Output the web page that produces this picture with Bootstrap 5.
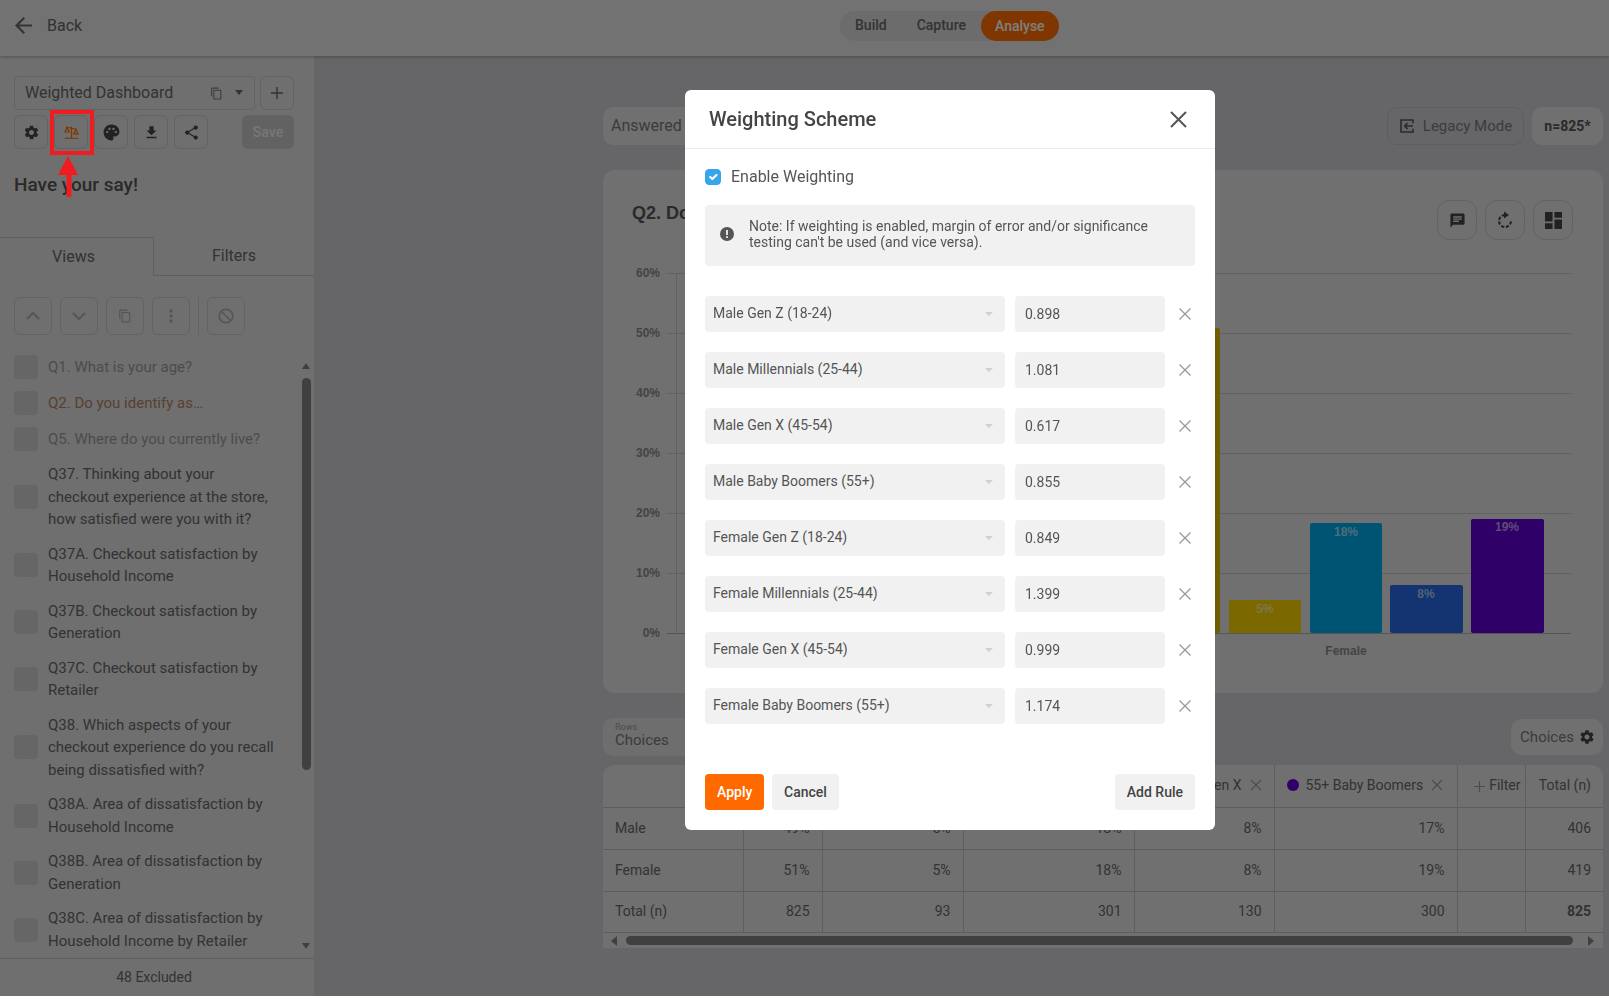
<!DOCTYPE html>
<html lang="en">
<head>
  <meta charset="UTF-8">
  <meta name="viewport" content="width=device-width, initial-scale=1">
  <title>Weighting Scheme</title>
  <link href="https://cdn.jsdelivr.net/npm/bootstrap@5.3.3/dist/css/bootstrap.min.css" rel="stylesheet">
  <style>
    body {
      font-family: Roboto, "Liberation Sans", sans-serif;
      background: #fff;
      color: #666;
      overflow: hidden;
    }
    .app-wrap { height: 996px; overflow: hidden; }
    .top-bar {
      height: 56px;
      padding: 0 15px 5px;
      background: #e5e5e5;
      box-shadow: 0 1px 3px rgba(0,0,0,.25);
      position: relative;
      z-index: 2;
    }
    .back-link { font-size: 16px; color: #666; gap: 15px; width: 825px; }
    .stage-pills { background: #d8d8d8; border-radius: 15px; height: 30px; font-size: 14px; font-weight: 500; color: #666; }
    .stage-pills span { padding: 0 15px; }
    .stage-pills .stage-on { background: #ff6d00; color: #fff; height: 30px; line-height: 30px; border-radius: 15px; padding: 0 14px; }
    .side-col { width: 314px; flex: none; background: #dedede; height: 940px; }
    .side-top { padding: 20px 20px 0 14px; }
    .dash-pick { width: 241px; height: 34px; border: 1px solid #c6c6c6; border-radius: 4px; font-size: 16px; padding: 0 10px; }
    .dash-copy { margin-right: 11px; }
    .tool-row { margin-top: 5px; gap: 6px; }
    .tool-btn { width: 34px; height: 34px; border: 1px solid #c6c6c6; border-radius: 6px; flex: none; color: #333; }
    .save-btn { width: 52px; height: 34px; margin-left: auto; background: #c4c4c4; border-radius: 6px; font-size: 14px; font-weight: 500; color: #f0f0f0; }
    .say-title { font-size: 19px; font-weight: 500; margin-top: 25px; height: 28px; line-height: 22px; color: #555; }
    .side-tabs { margin-top: 35px; height: 39px; font-size: 16px; }
    .side-tab-on { width: 154px; padding-right: 6px; border-top: 1px solid #bfbfbf; border-right: 1px solid #bfbfbf; }
    .side-tab-off { flex: 1; border-bottom: 1px solid #bfbfbf; }
    .list-tools { padding: 21px 0 0 14px; gap: 8px; height: 72px; }
    .list-tool { width: 38px; height: 38px; border: 1px solid #c6c6c6; border-radius: 6px; color: #aaa; flex: none; }
    .list-split { width: 1px; height: 38px; background: #c6c6c6; }
    .q-wrap { height: 610px; overflow: hidden; padding: 1px 0 0 14px; font-size: 15px; line-height: 22.5px; }
    .q-row { min-height: 36px; padding: 6px 40px 6px 0; gap: 10px; }
    .q-box { width: 24px; height: 24px; background: #cccccc; border-radius: 4px; flex: none; }
    .q-off { color: #999; }
    .q-cur { color: #b5805f; }
    .bar-thumb { position: absolute; left: 302px; top: 378px; width: 9px; height: 392px; background: #808080; border-radius: 5px; }
    .bar-up, .bar-down { position: absolute; left: 302px; width: 0; height: 0; border-left: 4.5px solid transparent; border-right: 4.5px solid transparent; }
    .bar-up { top: 363px; border-bottom: 6px solid #808080; }
    .bar-down { top: 943px; border-top: 6px solid #808080; }
    .side-foot { height: 38px; padding-right: 6px; border-top: 1px solid #c0c0c0; font-size: 14px; }
    .main-col { flex: 1; min-width: 0; background: #cdcdd1; padding: 51px 6px 0 289px; }
    .pill-box { width: 300px; height: 38px; background: #e0e0e0; border-radius: 10px; font-size: 16px; color: #777; }
    .legacy-btn { width: 137px; height: 38px; border: 1px solid #bdbdbd; border-radius: 10px; font-size: 15px; color: #777; gap: 8px; }
    .n-box { width: 71px; height: 38px; background: #e0e0e0; border-radius: 10px; font-size: 14px; font-weight: 700; color: #555; }
    .chart-panel { height: 523px; margin-top: 25px; background: #e1e1e1; border-radius: 12px; }
    .chart-head { height: 70px; padding: 30px 30px 0 29px; }
    .chart-title { width: 60px; height: 24px; overflow: hidden; white-space: nowrap; font-family: "Liberation Sans", sans-serif; font-size: 18px; font-weight: 700; color: #555; }
    .chart-btn { width: 40px; height: 40px; border: 1px solid #c4c4c4; border-radius: 12px; color: #444; }
    .chart-svg { display: block; }
    .chart-svg text { font-family: "Liberation Sans", sans-serif; font-size: 12px; font-weight: 700; }
    .rows-line { margin-top: 25px; height: 38px; }
    .rows-pill { width: 300px; height: 38px; background: #dcdcdc; border-radius: 10px; padding: 5px 12px; color: #777; line-height: 1; }
    .rows-cap { font-size: 9px; color: #999; }
    .rows-val { font-size: 15px; margin-top: 1px; }
    .choice-pill { width: 92px; height: 36px; background: #e0e0e0; border-radius: 10px; font-size: 15px; color: #777; gap: 6px; }
    .data-wrap { margin-top: 9px; height: 183px; background: #e1e1e1; border-radius: 12px 12px 0 0; overflow: hidden; }
    .data-grid { table-layout: fixed; width: 1000px; border-collapse: collapse; font-size: 14px; color: #666; margin: 0; }
    .data-grid th, .data-grid td { height: 42px; padding: 0 12px; border-bottom: 1px solid #bcbcbc; border-left: 1px solid #bcbcbc; background: transparent; color: #666; text-align: right; vertical-align: middle; font-weight: 400; white-space: nowrap; overflow: hidden; }
    .data-grid th:first-child, .data-grid td:first-child { border-left: 0; text-align: left; }
    .data-grid tr:last-child td { height: 41px; }
    .head-dot { display: inline-block; width: 12px; height: 12px; border-radius: 50%; background: #5c00d0; margin-right: 7px; vertical-align: -1px; }
    .head-x { margin-left: 8px; vertical-align: -1px; }
    .hscroll { height: 16px; padding: 3px 9px 0 8px; }
    .hs-thumb { flex: 1; height: 9px; background: #808080; border-radius: 5px; margin: 0 15px 0 9px; }
    .hs-left, .hs-right { width: 0; height: 0; border-top: 5px solid transparent; border-bottom: 5px solid transparent; }
    .hs-left { border-right: 6px solid #808080; }
    .hs-right { border-left: 6px solid #808080; }

    .modal-backdrop { height: 996px; }
    .weight-dialog { max-width: 530px; width: 530px; margin: 90px 0 0 685px; }
    .weight-panel { height: 740px; border: 0; border-radius: 6px; color: #555; }
    .weight-head { height: 59px; padding: 0 28px 0 24px; border-bottom: 1px solid #ececec; }
    .weight-title { font-size: 20px; font-weight: 500; color: #444; }
    .weight-body { padding: 20px 20px 0 20px; }
    .enable-line { height: 16px; gap: 10px; font-size: 16px; }
    .enable-line .form-check-input { width: 16px; height: 16px; margin: 0; background-color: #36a5ea; border-color: #36a5ea; }
    .note-box { height: 61px; margin-top: 20px; background: #f1f1f1; border-radius: 4px; padding: 0 30px 4px 15px; gap: 15px; font-size: 14px; line-height: 16px; }
    .rule-list { margin-top: 30px; gap: 20px; }
    .rule-line { height: 36px; gap: 10px; }
    .rule-pick { width: 300px; height: 36px; background: #f1f1f1; border-radius: 4px; padding: 0 12px 1px 8px; font-size: 14px; flex: none; }
    .rule-caret { width: 0; height: 0; border-left: 4px solid transparent; border-right: 4px solid transparent; border-top: 4px solid #d0d0d0; }
    .rule-num { width: 150px; height: 36px; flex: none; background: #f1f1f1; border: 0; border-radius: 4px; padding: 0 10px; font-size: 14px; color: #555; }
    .rule-x { margin-left: 4px; flex: none; }
    .act-line { margin-top: 50px; gap: 8px; }
    .act-btn { height: 36px; padding: 0 12px; border: 0; border-radius: 4px; background: #f1f1f1; font-size: 14px; font-weight: 500; color: #444; }
    .act-apply { width: 59px; background: #ff6a00; color: #fff; }
    .note-mark { position: absolute; left: 0; top: 0; z-index: 1060; pointer-events: none; }
  </style>
</head>
<body>

<div class="app-wrap position-relative">

  <!-- top bar -->
  <div class="top-bar d-flex align-items-center">
    <div class="back-link d-flex align-items-center">
      <svg width="17" height="17" viewBox="4 4 16 16" fill="#666"><path d="M20 11H7.83l5.59-5.59L12 4l-8 8 8 8 1.41-1.41L7.83 13H20v-2z"/></svg>
      <span>Back</span>
    </div>
    <div class="stage-pills d-flex align-items-center">
      <span>Build</span><span>Capture</span><span class="stage-on">Analyse</span>
    </div>
  </div>

  <div class="d-flex">
    <!-- left column -->
    <div class="side-col">
      <div class="side-top">
        <div class="d-flex">
          <div class="dash-pick d-flex align-items-center">
            <span class="flex-grow-1">Weighted Dashboard</span>
            <svg class="dash-copy" width="13" height="13" viewBox="0 0 24 24" fill="#777"><path d="M16 1H4c-1.1 0-2 .9-2 2v14h2V3h12V1zm3 4H8c-1.1 0-2 .9-2 2v14c0 1.1.9 2 2 2h11c1.1 0 2-.9 2-2V7c0-1.1-.9-2-2-2zm0 16H8V7h11v14z"/></svg>
            <svg width="10" height="6" viewBox="0 0 10 6" fill="#666"><path d="M1 0h8L5 5z"/></svg>
          </div>
          <div class="tool-btn d-flex align-items-center justify-content-center ms-auto">
            <svg width="14" height="14" viewBox="0 0 14 14" stroke="#666" stroke-width="1.4"><path d="M7 1v12M1 7h12"/></svg>
          </div>
        </div>
        <div class="tool-row d-flex">
          <div class="tool-btn d-flex align-items-center justify-content-center">
            <svg width="17" height="17" viewBox="0 0 24 24" fill="#444"><path d="M19.14 12.94c.04-.3.06-.61.06-.94 0-.32-.02-.64-.07-.94l2.03-1.58c.18-.14.23-.41.12-.61l-1.92-3.32c-.12-.22-.37-.29-.59-.22l-2.39.96c-.5-.38-1.03-.7-1.62-.94l-.36-2.54c-.04-.24-.24-.41-.48-.41h-3.84c-.24 0-.43.17-.47.41l-.36 2.54c-.59.24-1.13.57-1.62.94l-2.39-.96c-.22-.08-.47 0-.59.22L2.74 8.87c-.12.21-.08.47.12.61l2.03 1.58c-.05.3-.09.63-.09.94s.02.64.07.94l-2.03 1.58c-.18.14-.23.41-.12.61l1.92 3.32c.12.22.37.29.59.22l2.39-.96c.5.38 1.03.7 1.62.94l.36 2.54c.05.24.24.41.48.41h3.84c.24 0 .44-.17.47-.41l.36-2.54c.59-.24 1.13-.56 1.62-.94l2.39.96c.22.08.47 0 .59-.22l1.92-3.32c.12-.22.07-.47-.12-.61l-2.01-1.58zM12 15.6c-1.98 0-3.6-1.62-3.6-3.6s1.62-3.6 3.6-3.6 3.6 1.62 3.6 3.6-1.62 3.6-3.6 3.6z"/></svg>
          </div>
          <div class="tool-btn d-flex align-items-center justify-content-center">
            <svg width="15" height="14" viewBox="0 0 24 22" fill="none" stroke="#ff6d00" stroke-width="1.9"><path d="M1 21h22M12 2v19M3 3l18 4"/><path d="M5 4L1.500 11h7zM19 7l-3.500 7h7z"/></svg>
          </div>
          <div class="tool-btn d-flex align-items-center justify-content-center">
            <svg width="19" height="19" viewBox="0 0 24 24" fill="#444"><path d="M12 2C6.49 2 2 6.49 2 12s4.49 10 10 10c1.38 0 2.5-1.12 2.5-2.5 0-.61-.23-1.2-.64-1.67-.08-.1-.13-.21-.13-.33 0-.28.22-.5.5-.5H16c3.31 0 6-2.69 6-6 0-4.96-4.49-9-10-9zm5.5 11c-.83 0-1.5-.67-1.5-1.5s.67-1.5 1.5-1.5 1.5.67 1.5 1.5-.67 1.5-1.5 1.5zm-3-4c-.83 0-1.5-.67-1.5-1.5S13.67 6 14.5 6s1.5.67 1.5 1.5S15.33 9 14.5 9zM5 11.5C5 10.67 5.67 10 6.5 10S8 10.67 8 11.5 7.33 13 6.5 13 5 12.33 5 11.5zm6-4c0 .83-.67 1.5-1.5 1.5S8 8.33 8 7.5 8.67 6 9.5 6s1.5.67 1.5 1.5z"/></svg>
          </div>
          <div class="tool-btn d-flex align-items-center justify-content-center">
            <svg width="17" height="17" viewBox="0 0 24 24" fill="#444"><path d="M19 9h-4V3H9v6H5l7 7 7-7zM5 18v2h14v-2H5z"/></svg>
          </div>
          <div class="tool-btn d-flex align-items-center justify-content-center">
            <svg width="17" height="17" viewBox="0 0 24 24" fill="#444"><path d="M18 16.08c-.76 0-1.44.3-1.96.77L8.91 12.7c.05-.23.09-.46.09-.7s-.04-.47-.09-.7l7.05-4.11c.54.5 1.25.81 2.04.81 1.66 0 3-1.34 3-3s-1.34-3-3-3-3 1.34-3 3c0 .24.04.47.09.7L8.04 9.81C7.5 9.31 6.79 9 6 9c-1.66 0-3 1.34-3 3s1.34 3 3 3c.79 0 1.5-.31 2.04-.81l7.12 4.16c-.05.21-.08.43-.08.65 0 1.61 1.31 2.92 2.92 2.92s2.92-1.31 2.92-2.92-1.31-2.92-2.92-2.92z"/></svg>
          </div>
          <div class="save-btn d-flex align-items-center justify-content-center">Save</div>
        </div>
        <div class="say-title">Have your say!</div>
      </div>

      <div class="side-tabs d-flex">
        <div class="side-tab-on d-flex align-items-center justify-content-center">Views</div>
        <div class="side-tab-off d-flex align-items-center justify-content-center">Filters</div>
      </div>

      <div class="list-tools d-flex">
        <div class="list-tool d-flex align-items-center justify-content-center"><svg width="14" height="8" viewBox="0 0 14 8" fill="none" stroke="#aaa" stroke-width="2"><path d="M1 7l6-6 6 6"/></svg></div>
        <div class="list-tool d-flex align-items-center justify-content-center"><svg width="14" height="8" viewBox="0 0 14 8" fill="none" stroke="#aaa" stroke-width="2"><path d="M1 1l6 6 6-6"/></svg></div>
        <div class="list-tool d-flex align-items-center justify-content-center"><svg width="14" height="14" viewBox="0 0 24 24" fill="#aaa"><path d="M16 1H4c-1.1 0-2 .9-2 2v14h2V3h12V1zm3 4H8c-1.1 0-2 .9-2 2v14c0 1.1.9 2 2 2h11c1.1 0 2-.9 2-2V7c0-1.1-.9-2-2-2zm0 16H8V7h11v14z"/></svg></div>
        <div class="list-tool d-flex align-items-center justify-content-center"><svg width="4" height="14" viewBox="0 0 4 14" fill="#aaa"><circle cx="2" cy="2" r="1.7"/><circle cx="2" cy="7" r="1.7"/><circle cx="2" cy="12" r="1.7"/></svg></div>
        <div class="list-split"></div>
        <div class="list-tool d-flex align-items-center justify-content-center"><svg width="16" height="16" viewBox="0 0 16 16" fill="none" stroke="#aaa" stroke-width="1.6"><circle cx="8" cy="8" r="6.8"/><path d="M3.2 3.2l9.6 9.6"/></svg></div>
      </div>

      <div class="q-wrap">
        <div class="q-row d-flex align-items-center"><div class="q-box"></div><div class="q-off">Q1. What is your age?</div></div>
        <div class="q-row d-flex align-items-center"><div class="q-box"></div><div class="q-cur">Q2. Do you identify as…</div></div>
        <div class="q-row d-flex align-items-center"><div class="q-box"></div><div class="q-off">Q5. Where do you currently live?</div></div>
        <div class="q-row d-flex align-items-center"><div class="q-box"></div><div>Q37. Thinking about your checkout experience at the store, how satisfied were you with it?</div></div>
        <div class="q-row d-flex align-items-center"><div class="q-box"></div><div>Q37A. Checkout satisfaction by Household Income</div></div>
        <div class="q-row d-flex align-items-center"><div class="q-box"></div><div>Q37B. Checkout satisfaction by Generation</div></div>
        <div class="q-row d-flex align-items-center"><div class="q-box"></div><div>Q37C. Checkout satisfaction by Retailer</div></div>
        <div class="q-row d-flex align-items-center"><div class="q-box"></div><div>Q38. Which aspects of your checkout experience do you recall being dissatisfied with?</div></div>
        <div class="q-row d-flex align-items-center"><div class="q-box"></div><div>Q38A. Area of dissatisfaction by Household Income</div></div>
        <div class="q-row d-flex align-items-center"><div class="q-box"></div><div>Q38B. Area of dissatisfaction by Generation</div></div>
        <div class="q-row d-flex align-items-center"><div class="q-box"></div><div>Q38C. Area of dissatisfaction by Household Income by Retailer</div></div>
      </div>
      <div class="side-foot d-flex align-items-center justify-content-center">48 Excluded</div>
      <div class="bar-up"></div><div class="bar-thumb"></div><div class="bar-down"></div>
    </div>

    <!-- main column -->
    <div class="main-col">
      <div class="d-flex align-items-center">
        <div class="pill-box d-flex align-items-center px-2">Answered</div>
        <div class="legacy-btn d-flex align-items-center justify-content-center ms-auto">
          <svg width="16" height="16" viewBox="0 0 24 24" fill="none" stroke="#555" stroke-width="2.4"><path d="M21 8V3H3v18h18v-5"/><path d="M21 12H9M13 7.5L8.5 12l4.500 4.500"/></svg>
          <span>Legacy Mode</span>
        </div>
        <div class="n-box d-flex align-items-center justify-content-center ms-2">n=825*</div>
      </div>

      <div class="chart-panel">
        <div class="chart-head d-flex justify-content-between">
          <div class="chart-title">Q2. Do you identify as…</div>
          <div class="d-flex gap-2">
            <div class="chart-btn d-flex align-items-center justify-content-center"><svg width="17" height="17" viewBox="0 0 24 24" fill="#444"><path d="M20 2H4c-1.1 0-1.99.9-1.99 2L2 22l4-4h14c1.1 0 2-.9 2-2V4c0-1.1-.9-2-2-2zM6 9h12v2H6V9zm8 5H6v-2h8v2zm4-6H6V6h12v2z"/></svg></div>
            <div class="chart-btn d-flex align-items-center justify-content-center"><svg width="16" height="18" viewBox="0 0 16 18" fill="none" stroke="#444" stroke-width="2"><path d="M8 4a6 6 0 1 0 6 6" stroke-dasharray="3.2 1.6"/><path d="M7 .5l5 3.500-5 3.500z" fill="#444" stroke="none"/></svg></div>
            <div class="chart-btn d-flex align-items-center justify-content-center"><svg width="17" height="17" viewBox="3 3 18 18" fill="#444"><path d="M3 13h8V3H3v10zm0 8h8v-6H3v6zm10 0h8V11h-8v10zm0-18v6h8V3h-8z"/></svg></div>
          </div>
        </div>
        <svg class="chart-svg" width="1000" height="453" viewBox="0 0 1000 453">
          <g stroke="#c2c2c2" stroke-width="1">
            <path d="M64 33.5H968M64 93.5H968M64 153.5H968M64 213.5H968M64 273.5H968M64 333.5H968"/>
            <path d="M73.5 33V393" />
          </g>
          <path d="M64 393.5H968" stroke="#aaa"/>
          <g fill="#888" text-anchor="end">
            <text x="57" y="37">60%</text><text x="57" y="97">50%</text><text x="57" y="157">40%</text>
            <text x="57" y="217">30%</text><text x="57" y="277">20%</text><text x="57" y="337">10%</text><text x="57" y="397">0%</text>
          </g>
          <rect x="545" y="88" width="72" height="305" rx="2" fill="#e0ba00"/>
          <rect x="626" y="360" width="72" height="33" rx="2" fill="#f6d200"/>
          <rect x="707" y="283" width="72" height="110" rx="2" fill="#00a8e6"/>
          <rect x="787" y="345" width="73" height="48" rx="2" fill="#2768e2"/>
          <rect x="868" y="279" width="73" height="114" rx="2" fill="#5c00d0"/>
          <g fill="#fff" fill-opacity=".6" text-anchor="middle">
            <text x="662" y="373">5%</text><text x="743" y="296">18%</text><text x="823" y="358">8%</text><text x="904" y="291">19%</text>
          </g>
          <text x="743" y="415" text-anchor="middle" fill="#888">Female</text>
        </svg>
      </div>

      <div class="rows-line d-flex justify-content-between align-items-center">
        <div class="rows-pill"><div class="rows-cap">Rows</div><div class="rows-val">Choices</div></div>
        <div class="choice-pill d-flex align-items-center justify-content-center">
          <span>Choices</span>
          <svg width="14" height="14" viewBox="2 2 20 20" fill="#444"><path d="M19.14 12.94c.04-.3.06-.61.06-.94 0-.32-.02-.64-.07-.94l2.03-1.58c.18-.14.23-.41.12-.61l-1.92-3.32c-.12-.22-.37-.29-.59-.22l-2.39.96c-.5-.38-1.03-.7-1.62-.94l-.36-2.54c-.04-.24-.24-.41-.48-.41h-3.84c-.24 0-.43.17-.47.41l-.36 2.54c-.59.24-1.13.57-1.62.94l-2.39-.96c-.22-.08-.47 0-.59.22L2.74 8.87c-.12.21-.08.47.12.61l2.03 1.58c-.05.3-.09.63-.09.94s.02.64.07.94l-2.03 1.58c-.18.14-.23.41-.12.61l1.92 3.32c.12.22.37.29.59.22l2.39-.96c.5.38 1.03.7 1.62.94l.36 2.54c.05.24.24.41.48.41h3.84c.24 0 .44-.17.47-.41l.36-2.54c.59-.24 1.13-.56 1.62-.94l2.39.96c.22.08.47 0 .59-.22l1.92-3.32c.12-.22.07-.47-.12-.61l-2.01-1.58zM12 15.6c-1.98 0-3.6-1.62-3.6-3.6s1.62-3.6 3.6-3.6 3.6 1.62 3.6 3.6-1.62 3.6-3.6 3.6z"/></svg>
        </div>
      </div>

      <div class="data-wrap">
        <table class="table data-grid">
          <colgroup><col style="width:140px"><col style="width:79px"><col style="width:141px"><col style="width:171px"><col style="width:140px"><col style="width:183px"><col style="width:68px"><col style="width:78px"></colgroup>
          <thead>
            <tr>
              <th></th><th></th><th></th><th></th>
              <th>Gen X<svg class="head-x" width="12" height="12" viewBox="0 0 12 12" stroke="#999" stroke-width="1.2"><path d="M1 1l10 10M11 1L1 11"/></svg></th>
              <th class="text-start"><span class="head-dot"></span>55+ Baby Boomers<svg class="head-x" width="12" height="12" viewBox="0 0 12 12" stroke="#999" stroke-width="1.2"><path d="M1 1l10 10M11 1L1 11"/></svg></th>
              <th class="px-1"><svg width="11" height="11" viewBox="0 0 11 11" stroke="#999" stroke-width="1.2" class="me-1"><path d="M5.500 0v11M0 5.500h11"/></svg>Filter</th>
              <th>Total (n)</th>
            </tr>
          </thead>
          <tbody>
            <tr><td>Male</td><td>49%</td><td>5%</td><td>18%</td><td>8%</td><td>17%</td><td></td><td>406</td></tr>
            <tr><td>Female</td><td>51%</td><td>5%</td><td>18%</td><td>8%</td><td>19%</td><td></td><td>419</td></tr>
            <tr><td>Total (n)</td><td>825</td><td>93</td><td>301</td><td>130</td><td>300</td><td></td><td><b>825</b></td></tr>
          </tbody>
        </table>
        <div class="hscroll d-flex align-items-start">
          <div class="hs-left"></div><div class="hs-thumb"></div><div class="hs-right"></div>
        </div>
      </div>
    </div>
  </div>
</div>

<div class="modal-backdrop show"></div>

<div class="modal d-block" tabindex="-1">
  <div class="modal-dialog weight-dialog">
    <div class="modal-content weight-panel">
      <div class="weight-head d-flex align-items-center justify-content-between">
        <div class="weight-title">Weighting Scheme</div>
        <svg width="17" height="17" viewBox="0 0 17 17" stroke="#555" stroke-width="2"><path d="M1 1l15 15M16 1L1 16"/></svg>
      </div>
      <div class="weight-body">
        <div class="enable-line d-flex align-items-center">
          <input class="form-check-input" type="checkbox" checked>
          <span>Enable Weighting</span>
        </div>
        <div class="note-box d-flex align-items-center">
          <svg class="flex-shrink-0" width="14" height="14" viewBox="0 0 14 14"><circle cx="7" cy="7" r="7" fill="#555"/><rect x="6.1" y="3" width="1.8" height="5" fill="#f1f1f1"/><rect x="6.1" y="9.2" width="1.8" height="1.8" fill="#f1f1f1"/></svg>
          <div>Note: If weighting is enabled, margin of error and/or significance testing can't be used (and vice versa).</div>
        </div>
        <div class="rule-list d-flex flex-column">
          <div class="rule-line d-flex align-items-center"><div class="rule-pick d-flex align-items-center justify-content-between"><span>Male Gen Z (18-24)</span><span class="rule-caret"></span></div><input class="rule-num" value="0.898"><svg class="rule-x" width="12" height="12" viewBox="0 0 12 12" stroke="#999" stroke-width="1.3"><path d="M.5.5l11 11M11.500.5l-11 11"/></svg></div>
          <div class="rule-line d-flex align-items-center"><div class="rule-pick d-flex align-items-center justify-content-between"><span>Male Millennials (25-44)</span><span class="rule-caret"></span></div><input class="rule-num" value="1.081"><svg class="rule-x" width="12" height="12" viewBox="0 0 12 12" stroke="#999" stroke-width="1.3"><path d="M.5.5l11 11M11.500.5l-11 11"/></svg></div>
          <div class="rule-line d-flex align-items-center"><div class="rule-pick d-flex align-items-center justify-content-between"><span>Male Gen X (45-54)</span><span class="rule-caret"></span></div><input class="rule-num" value="0.617"><svg class="rule-x" width="12" height="12" viewBox="0 0 12 12" stroke="#999" stroke-width="1.3"><path d="M.5.5l11 11M11.500.5l-11 11"/></svg></div>
          <div class="rule-line d-flex align-items-center"><div class="rule-pick d-flex align-items-center justify-content-between"><span>Male Baby Boomers (55+)</span><span class="rule-caret"></span></div><input class="rule-num" value="0.855"><svg class="rule-x" width="12" height="12" viewBox="0 0 12 12" stroke="#999" stroke-width="1.3"><path d="M.5.5l11 11M11.500.5l-11 11"/></svg></div>
          <div class="rule-line d-flex align-items-center"><div class="rule-pick d-flex align-items-center justify-content-between"><span>Female Gen Z (18-24)</span><span class="rule-caret"></span></div><input class="rule-num" value="0.849"><svg class="rule-x" width="12" height="12" viewBox="0 0 12 12" stroke="#999" stroke-width="1.3"><path d="M.5.5l11 11M11.500.5l-11 11"/></svg></div>
          <div class="rule-line d-flex align-items-center"><div class="rule-pick d-flex align-items-center justify-content-between"><span>Female Millennials (25-44)</span><span class="rule-caret"></span></div><input class="rule-num" value="1.399"><svg class="rule-x" width="12" height="12" viewBox="0 0 12 12" stroke="#999" stroke-width="1.3"><path d="M.5.5l11 11M11.500.5l-11 11"/></svg></div>
          <div class="rule-line d-flex align-items-center"><div class="rule-pick d-flex align-items-center justify-content-between"><span>Female Gen X (45-54)</span><span class="rule-caret"></span></div><input class="rule-num" value="0.999"><svg class="rule-x" width="12" height="12" viewBox="0 0 12 12" stroke="#999" stroke-width="1.3"><path d="M.5.5l11 11M11.500.5l-11 11"/></svg></div>
          <div class="rule-line d-flex align-items-center"><div class="rule-pick d-flex align-items-center justify-content-between"><span>Female Baby Boomers (55+)</span><span class="rule-caret"></span></div><input class="rule-num" value="1.174"><svg class="rule-x" width="12" height="12" viewBox="0 0 12 12" stroke="#999" stroke-width="1.3"><path d="M.5.5l11 11M11.500.5l-11 11"/></svg></div>
        </div>
        <div class="act-line d-flex">
          <button class="act-btn act-apply" type="button">Apply</button>
          <button class="act-btn" type="button">Cancel</button>
          <button class="act-btn ms-auto" type="button">Add Rule</button>
        </div>
      </div>
    </div>
  </div>
</div>

<!-- red callout sits above the dimmed page -->
<svg class="note-mark" width="110" height="205" viewBox="0 0 110 205">
  <rect x="52" y="112" width="40" height="41" fill="none" stroke="#f01c20" stroke-width="4"/>
  <path d="M68 156l10 19h-6.500v22h-5v-22H58z" fill="#f01c20"/>
</svg>

<script src="https://cdn.jsdelivr.net/npm/bootstrap@5.3.3/dist/js/bootstrap.bundle.min.js"></script>
</body>
</html>
